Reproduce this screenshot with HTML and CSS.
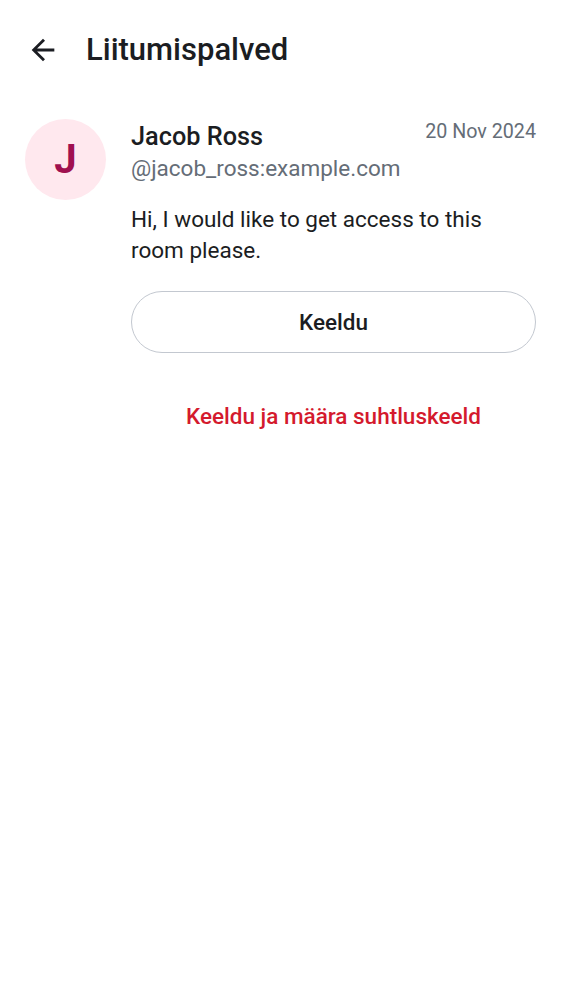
FILE: index.html
```html
<!DOCTYPE html>
<html>
<head>
<meta charset="utf-8">
<link rel="stylesheet" href="styles.css">
</head>
<body>
<header class="topbar">
  <svg class="back" width="34" height="34" viewBox="0 0 24 24"><path d="M20 11H7.83l5.59-5.59L12 4l-8 8 8 8 1.41-1.41L7.83 13H20v-2z" fill="#1b1d22"/></svg>
  <h1 class="title">Liitumispalved</h1>
</header>
<main class="request">
  <div class="avatar">J</div>
  <div class="body">
    <div class="head">
      <div class="names">
        <div class="name">Jacob Ross</div>
        <div class="uid">@jacob_ross:example.com</div>
      </div>
      <div class="date">20 Nov 2024</div>
    </div>
    <p class="msg">Hi, I would like to get access to this room please.</p>
    <button class="decline">Keeldu</button>
    <button class="ban">Keeldu ja määra suhtluskeeld</button>
  </div>
</main>
</body>
</html>
```
FILE: styles.css
```css
* { box-sizing: border-box; }
body {
  margin: 0;
  background: #fff;
  font-family: Roboto, "Noto Sans", sans-serif;
  color: #1b1d22;
}
.topbar {
  display: flex;
  align-items: center;
  height: 99px;
  padding-left: 26px;
  gap: 26px;
}
.back { display: block; flex: none; }
.title {
  margin: 0;
  font-size: 31px;
  font-weight: 500;
  line-height: 36px;
}
.request {
  display: flex;
  padding: 20px 26px 0 25px;
  gap: 25px;
}
.avatar {
  flex: none;
  width: 81px;
  height: 81px;
  border-radius: 50%;
  background: #ffe8ee;
  color: #a0104f;
  font-size: 40px;
  font-weight: 700;
  display: flex;
  align-items: center;
  justify-content: center;
}
.body { flex: 1; display: flex; flex-direction: column; }
.head { display: flex; justify-content: space-between; align-items: flex-start; }
.name {
  font-size: 25.3px;
  font-weight: 500;
  line-height: 31px;
  margin-top: 2px;
}
.uid {
  font-size: 22.5px;
  color: #656d77;
  line-height: 31px;
  margin-top: 1px;
}
.date {
  font-size: 19.7px;
  color: #656d77;
  line-height: 28px;
  margin-top: -1px;
}
.msg {
  margin: 20px 0 0;
  font-size: 22.5px;
  line-height: 31px;
}
.decline {
  margin-top: 25px;
  height: 62px;
  border: 1.5px solid #c3c8d0;
  border-radius: 31px;
  background: #fff;
  font-family: inherit;
  font-size: 22.5px;
  font-weight: 500;
  color: #1b1d22;
}
.ban {
  margin-top: 32px;
  height: 62px;
  border: none;
  background: none;
  font-family: inherit;
  font-size: 22.5px;
  font-weight: 500;
  color: #d41a2d;
}
```
